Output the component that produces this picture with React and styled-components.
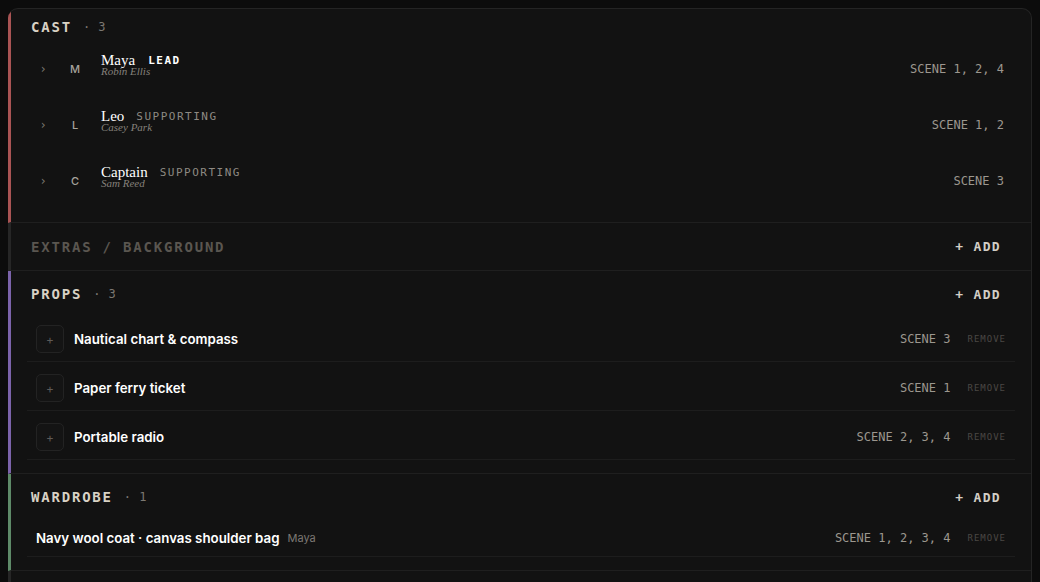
import React from "react";
import styled, { createGlobalStyle } from "styled-components";

const mono = `"DejaVu Sans Mono", "Liberation Mono", monospace`;
const sans = `Inter, "Noto Sans", sans-serif`;
const serif = `"Liberation Serif", "DejaVu Serif", serif`;

const cast = [
  { initial: "M", name: "Maya", role: "LEAD", actor: "Robin Ellis", scenes: "SCENE 1, 2, 4" },
  { initial: "L", name: "Leo", role: "SUPPORTING", actor: "Casey Park", scenes: "SCENE 1, 2" },
  { initial: "C", name: "Captain", role: "SUPPORTING", actor: "Sam Reed", scenes: "SCENE 3" },
];

const props = [
  { name: "Nautical chart & compass", scenes: "SCENE 3" },
  { name: "Paper ferry ticket", scenes: "SCENE 1" },
  { name: "Portable radio", scenes: "SCENE 2, 3, 4" },
];

const App = () => {
  return (
    <>
      <GlobalStyle />
      <Card>
        <Section $accent="#a95454">
          <Header $compact>
            <Title>CAST</Title>
            <Count>· 3</Count>
          </Header>
          {cast.map((c) => (
            <CastRow key={c.name}>
              <Chevron>›</Chevron>
              <Initial>{c.initial}</Initial>
              <NameBlock>
                <NameLine>
                  <CharName>{c.name}</CharName>
                  <Role $lead={c.role === "LEAD"}>{c.role}</Role>
                </NameLine>
                <Actor>{c.actor}</Actor>
              </NameBlock>
              <Scenes>{c.scenes}</Scenes>
            </CastRow>
          ))}
        </Section>

        <Section $accent="#262626" $flat>
          <Header $tall>
            <Title $dim>EXTRAS / BACKGROUND</Title>
            <AddButton>+ ADD</AddButton>
          </Header>
        </Section>

        <Section $accent="#7b63aa">
          <Header>
            <Title>PROPS</Title>
            <Count>· 3</Count>
            <AddButton>+ ADD</AddButton>
          </Header>
          <List>
            {props.map((p) => (
              <ItemRow key={p.name}>
                <PlusBox>+</PlusBox>
                <ItemName>{p.name}</ItemName>
                <Scenes>{p.scenes}</Scenes>
                <Remove>REMOVE</Remove>
              </ItemRow>
            ))}
          </List>
        </Section>

        <Section $accent="#5e8a68">
          <Header>
            <Title>WARDROBE</Title>
            <Count>· 1</Count>
            <AddButton>+ ADD</AddButton>
          </Header>
          <List>
            <ItemRow>
              <ItemName>Navy wool coat · canvas shoulder bag</ItemName>
              <Owner>Maya</Owner>
              <Scenes>SCENE 1, 2, 3, 4</Scenes>
              <Remove>REMOVE</Remove>
            </ItemRow>
          </List>
        </Section>
        <Section $accent="#262626" $flat>
          <Header />
        </Section>
      </Card>
    </>
  );
};

export default App;

const GlobalStyle = createGlobalStyle`
  html, body {
    background: #0c0c0c;
  }
  body {
    margin: 8px;
    font-family: ${sans};
    color: #eee;
    overflow: hidden;
  }
`;

const Card = styled.div`
  background: #121212;
  border: 1px solid #242424;
  border-left: none;
  border-radius: 10px;
  overflow: hidden;
  height: 640px;
`;

const Section = styled.div`
  border-left: 3px solid ${(p) => p.$accent};
  border-bottom: 1px solid #1f1f1f;
  padding: 0 16px ${(p) => (p.$flat ? "0" : "13px")};
`;

const Header = styled.div`
  box-sizing: border-box;
  display: flex;
  align-items: center;
  height: ${(p) => (p.$compact ? "32px" : p.$tall ? "47px" : "46px")};
  padding: ${(p) => (p.$compact ? "4px 4px 0" : "0 4px")};
`;

const Title = styled.span`
  font-family: ${mono};
  font-weight: bold;
  font-size: 14px;
  letter-spacing: 1.8px;
  color: ${(p) => (p.$dim ? "#5a5650" : "#d8d1c4")};
`;

const Count = styled.span`
  font-family: ${mono};
  font-size: 12px;
  letter-spacing: 0.5px;
  color: #7c7872;
  margin-left: 11px;
`;

const AddButton = styled.span`
  margin-left: auto;
  font-family: ${mono};
  font-weight: bold;
  font-size: 13px;
  letter-spacing: 1.3px;
  color: #d2cec6;
  padding: 4px 10px;
`;

const CastRow = styled.div`
  display: flex;
  align-items: center;
  height: 56px;
  padding: 0 11px 0 8px;
`;

const Chevron = styled.span`
  width: 16px;
  text-align: center;
  font-family: ${mono};
  font-size: 12px;
  color: #7a7670;
`;

const Initial = styled.span`
  width: 24px;
  height: 24px;
  margin-left: 12px;
  border-radius: 50%;
  display: flex;
  align-items: center;
  justify-content: center;
  font-family: ${sans};
  font-weight: 500;
  font-size: 11px;
  color: #a7a39c;
`;

const NameBlock = styled.div`
  display: flex;
  flex-direction: column;
  margin-left: 14px;
  padding-bottom: 9px;
`;

const NameLine = styled.div`
  display: flex;
  align-items: baseline;
  line-height: 12px;
  height: 12px;
`;

const CharName = styled.span`
  font-family: ${serif};
  font-size: 15px;
  color: #ffffff;
`;

const Role = styled.span`
  margin-left: ${(p) => (p.$lead ? "13px" : "12px")};
  position: relative;
  top: -1px;
  font-family: ${mono};
  font-size: 11px;
  font-weight: ${(p) => (p.$lead ? "bold" : "normal")};
  letter-spacing: 1.5px;
  color: ${(p) => (p.$lead ? "#ffffff" : "#8e8a83")};
`;

const Actor = styled.span`
  font-family: ${serif};
  font-style: italic;
  font-size: 11px;
  line-height: 10px;
  height: 10px;
  color: #85817b;
`;

const Scenes = styled.span`
  margin-left: auto;
  font-family: ${mono};
  font-size: 12px;
  color: #9c978f;
`;

const List = styled.div`
  display: flex;
  flex-direction: column;
  gap: 4px;
`;

const ItemRow = styled.div`
  display: flex;
  align-items: center;
  min-height: 20px;
  padding: 8px 9px 8px 9px;
  border-bottom: 1px solid #1d1d1d;
`;

const PlusBox = styled.span`
  box-sizing: border-box;
  width: 28px;
  height: 28px;
  margin-right: 10px;
  border: 1px solid #232323;
  border-radius: 5px;
  background: #141414;
  display: flex;
  align-items: center;
  justify-content: center;
  font-family: ${sans};
  font-size: 12px;
  color: #5e5b57;
`;

const ItemName = styled.span`
  font-family: ${sans};
  font-weight: 600;
  font-size: 13.3px;
  color: #ffffff;
`;

const Owner = styled.span`
  margin-left: 8px;
  font-family: ${sans};
  font-size: 11px;
  color: #7c7872;
`;

const Remove = styled.span`
  margin-left: 17px;
  font-family: ${mono};
  font-size: 9px;
  letter-spacing: 1px;
  color: #4a4744;
`;
